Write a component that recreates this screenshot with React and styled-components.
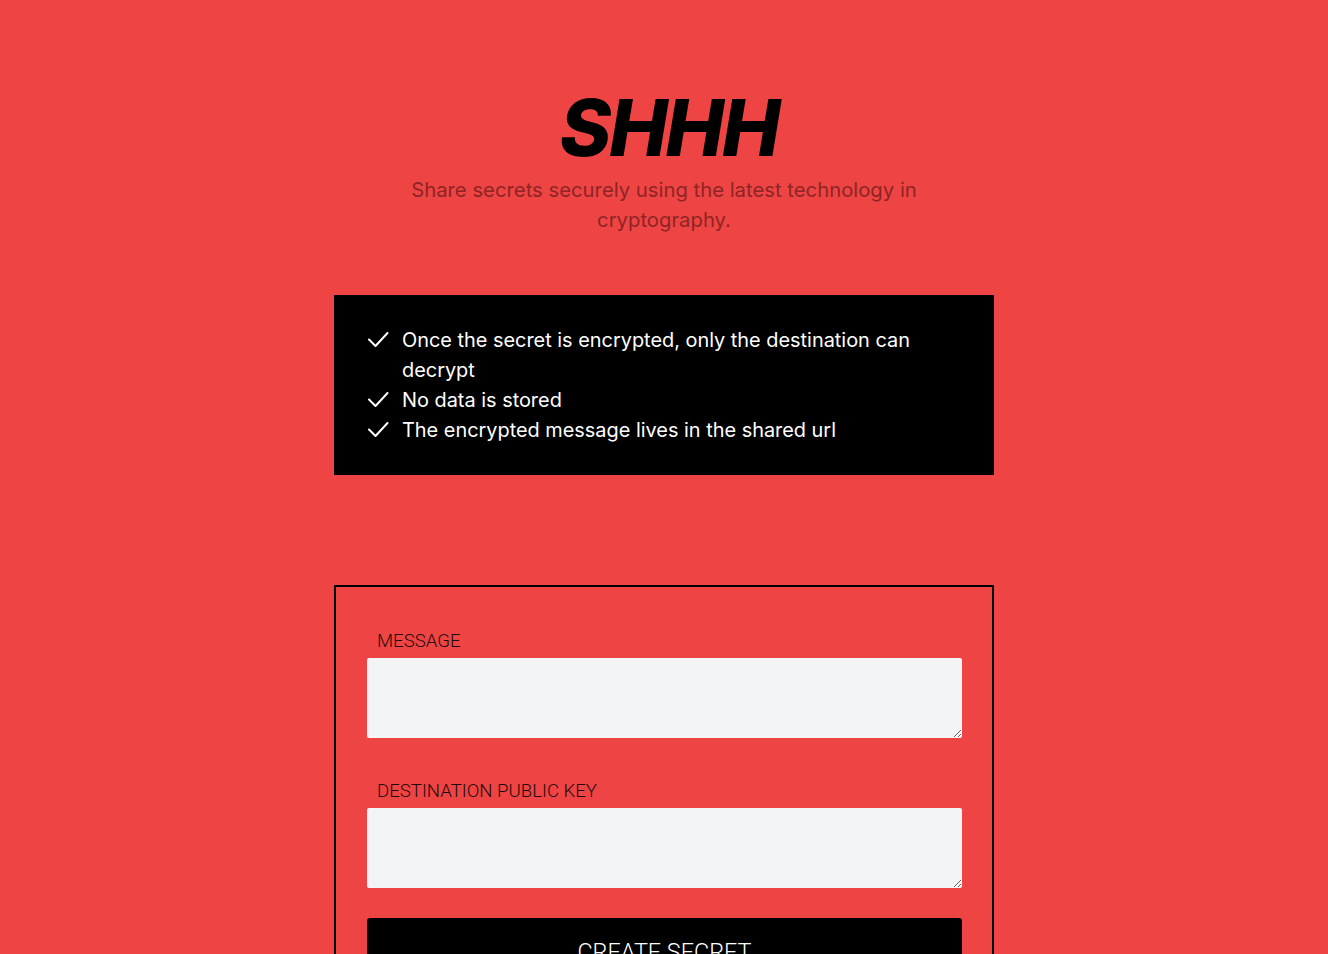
import React from 'react';
import styled, { createGlobalStyle } from 'styled-components';

const GlobalStyle = createGlobalStyle`
  html, body {
    margin: 0;
    padding: 0;
    background: #ef4444;
  }
  body {
    font-family: Inter, "Noto Sans", sans-serif;
  }
  * {
    box-sizing: border-box;
  }
`;

const Page = styled.main`
  min-height: 954px;
  display: flex;
  flex-direction: column;
  align-items: center;
  padding-top: 81px;
`;

const Header = styled.header`
  display: flex;
  flex-direction: column;
  align-items: center;
  max-width: 512px;
  text-align: center;
`;

const Title = styled.h1`
  margin: 0;
  padding-left: 10px;
  font-size: 78px;
  font-weight: 800;
  font-style: italic;
  letter-spacing: -2px;
  line-height: 94px;
  color: #000;
`;

const Subtitle = styled.p`
  margin: 0;
  font-size: 20.3px;
  line-height: 30px;
  color: #8e2424;
`;

const Features = styled.ul`
  list-style: none;
  margin: 60px 0 0;
  width: 660px;
  padding: 30px 32px;
  background: #000;
  color: #fff;
`;

const Feature = styled.li`
  display: flex;
  align-items: flex-start;
  font-size: 19.9px;
  line-height: 30px;

  svg {
    flex: none;
    margin: 6px 12px 0 2px;
  }
`;

const Form = styled.form`
  margin-top: 110px;
  width: 660px;
  border: 2px solid #000;
  padding: 42px 30px 40px 31px;
  display: flex;
  flex-direction: column;
`;

const Label = styled.label`
  display: block;
  padding-left: 10px;
  font-family: Roboto, "Liberation Sans", sans-serif;
  font-weight: 300;
  font-size: 18.6px;
  line-height: 24px;
  color: #1f0a0a;
  margin-bottom: 5px;
`;

const Field = styled.div`
  display: flex;
  flex-direction: column;
  margin-bottom: ${(p) => p.$gap || 0}px;
`;

const TextArea = styled.textarea`
  display: block;
  width: 100%;
  height: 80px;
  border: none;
  border-radius: 2px;
  background: #f3f4f6;
  padding: 8px 12px;
  font-family: Inter, sans-serif;
  font-size: 16px;
  outline: none;
`;

const Submit = styled.button`
  height: 60px;
  border: none;
  border-radius: 3px;
  background: #000;
  color: #fff;
  padding-top: 8px;
  font-family: Roboto, "Liberation Sans", sans-serif;
  font-weight: 300;
  font-size: 23.4px;
  cursor: pointer;
`;

function Check() {
  return (
    <svg width="22" height="18" viewBox="0 0 22 18" fill="none">
      <path d="M1 8.5l6.5 6.5L19.5 2" stroke="#fff" strokeWidth="2" strokeLinecap="round" strokeLinejoin="round" />
    </svg>
  );
}

const features = [
  'Once the secret is encrypted, only the destination can decrypt',
  'No data is stored',
  'The encrypted message lives in the shared url',
];

export default function App() {
  return (
    <>
      <GlobalStyle />
      <Page>
        <Header>
          <Title>SHHH</Title>
          <Subtitle>Share secrets securely using the latest technology in cryptography.</Subtitle>
        </Header>

        <Features>
          {features.map((text) => (
            <Feature key={text}>
              <Check />
              <span>{text}</span>
            </Feature>
          ))}
        </Features>

        <Form onSubmit={(e) => e.preventDefault()}>
          <Field $gap={41}>
            <Label htmlFor="message">MESSAGE</Label>
            <TextArea id="message" />
          </Field>
          <Field $gap={30}>
            <Label htmlFor="publicKey">DESTINATION PUBLIC KEY</Label>
            <TextArea id="publicKey" />
          </Field>
          <Submit type="submit">CREATE SECRET</Submit>
        </Form>
      </Page>
    </>
  );
}
